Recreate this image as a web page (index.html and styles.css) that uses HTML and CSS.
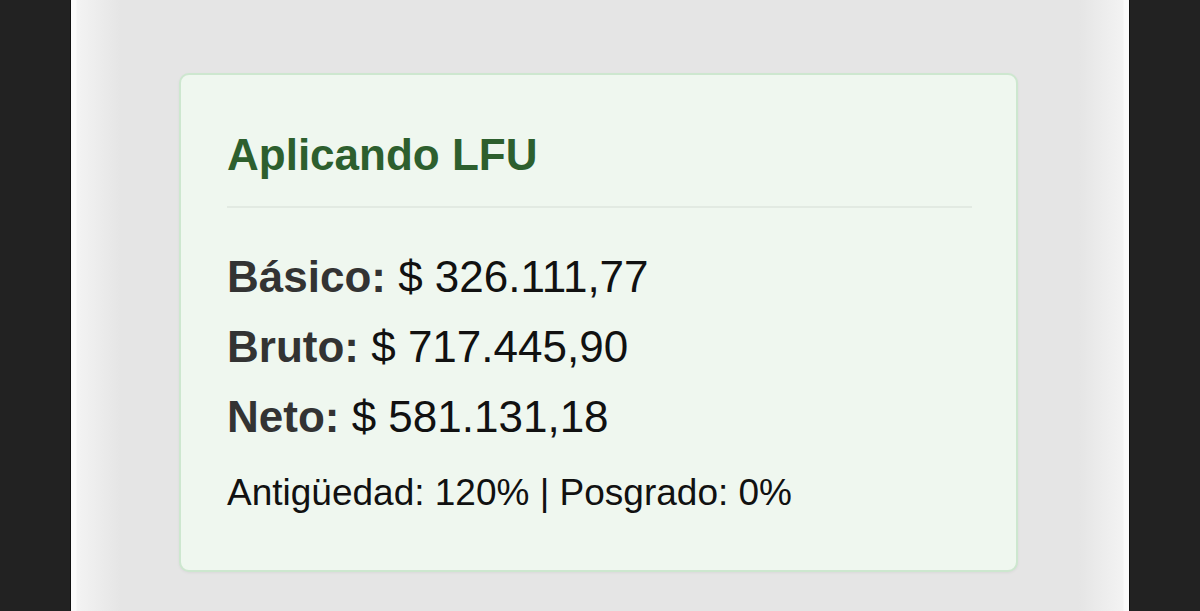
FILE: index.html
```html
<!DOCTYPE html>
<html lang="es">
<head>
  <meta charset="UTF-8" />
  <meta name="viewport" content="width=device-width, initial-scale=1.0"/>
  <title>Aplicando LFU</title>
  <link rel="stylesheet" href="styles.css">
</head>
<body>
  <div class="screen">
    <div class="result-card">
      <h3 class="result-title">Aplicando LFU</h3>
      <p class="result-row"><strong>Básico:</strong> $ 326.111,77</p>
      <p class="result-row"><strong>Bruto:</strong> $ 717.445,90</p>
      <p class="result-row"><strong>Neto:</strong> $ 581.131,18</p>
      <p class="result-note">Antigüedad: 120% | Posgrado: 0%</p>
    </div>
  </div>
</body>
</html>
```

FILE: styles.css
```css
* {
  box-sizing: border-box;
}
html, body {
  margin: 0;
  padding: 0;
  height: 100%;
  background: #222;
  font-family: "Liberation Sans", Arial, sans-serif;
  overflow: hidden;
}
.screen {
  width: 1060px;
  height: 100%;
  margin: 0 auto;
  padding: 73px 111px 0 108px;
  border-left: 1px solid #111;
  border-right: 1px solid #111;
  background: linear-gradient(to right,
    #fafafa 0, #fafafa 5px, #f3f3f3 6px, #e5e5e5 50px,
    #e5e5e5 calc(100% - 50px), #f3f3f3 calc(100% - 6px), #fafafa calc(100% - 5px), #fafafa 100%);
}
.result-card {
  background: #eff7ef;
  border: 2px solid #cde7cf;
  border-radius: 10px;
  padding: 54px 44px 56px 46px;
  height: 499px;
  box-shadow: 0 1px 3px rgba(0, 0, 0, 0.05);
}
.result-title {
  margin: 0;
  padding-bottom: 26px;
  border-bottom: 2px solid #e2eae2;
  font-size: 44px;
  line-height: 51px;
  font-weight: bold;
  color: #2d5f2e;
}
.result-row {
  margin: 0;
  font-size: 44px;
  line-height: 70px;
  color: #111;
}
.result-row:first-of-type {
  margin-top: 34px;
}
.result-row strong {
  color: #333;
}
.result-note {
  margin: 20px 0 0;
  font-size: 37px;
  line-height: 42px;
  color: #111;
}
```
